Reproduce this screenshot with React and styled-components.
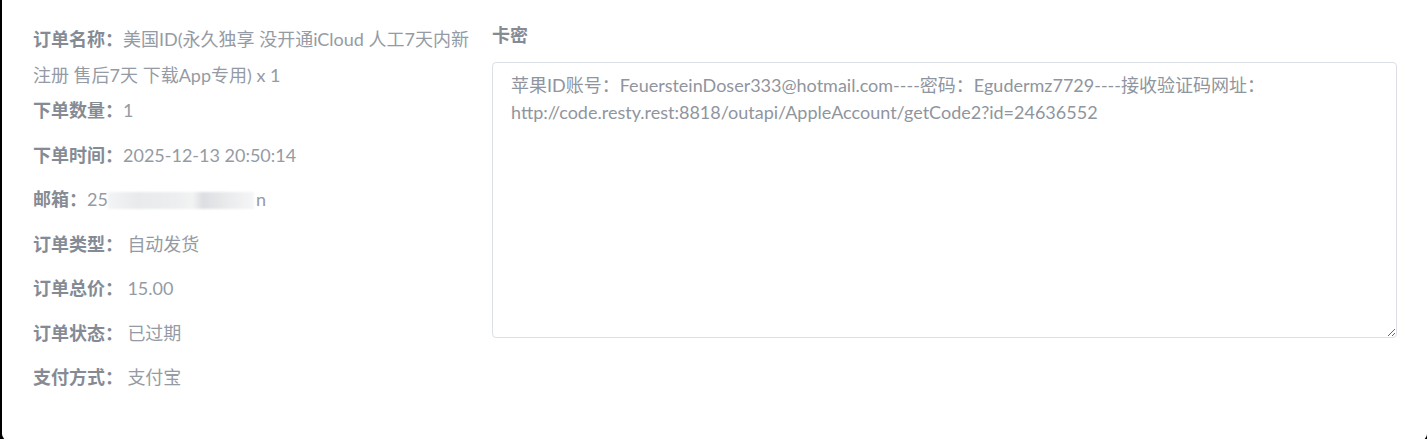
import React from "react";
import styled, { createGlobalStyle } from "styled-components";

const Global = createGlobalStyle`
  html, body { margin: 0; padding: 0; background: #000; overflow: hidden; }
  body { font-family: Lato, "Noto Sans CJK SC", sans-serif; }
`;

const Panel = styled.div`
  margin-left: 2px;
  width: 1425px;
  height: 440px;
  box-sizing: border-box;
  background: #fff;
  border-radius: 0 0 6px 6px;
  padding: 22px 15px 0 16px;
  display: grid;
  grid-template-columns: 459px 1fr;
  align-items: start;
`;

const InfoCol = styled.div`
  padding: 0 4px 0 15px;
  min-width: 0;
`;

const CardCol = styled.div`
  padding: 0 15px;
  min-width: 0;
`;

const Item = styled.div`
  font-size: 18px;
  line-height: 35.5px;
  color: #959ba4;
  margin-top: ${(p) => (p.$gap ? "9px" : "0")};
`;

const Label = styled.b`
  font-weight: 700;
  color: #858b94;
`;

const Blur = styled.span`
  display: inline-block;
  vertical-align: middle;
  width: 146px;
  height: 17px;
  margin: -2px 2px 0 0;
  background: linear-gradient(
    90deg,
    #f3f4f5 0%,
    #e9eaec 20%,
    #eceeef 45%,
    #f2f3f3 58%,
    #dcdee1 65%,
    #e4e6e8 75%,
    #eeeff0 88%,
    #f6f6f7 100%
  );
  filter: blur(1px);
`;

const Title = styled.div`
  font-size: 18px;
  font-weight: 700;
  line-height: 27px;
  color: #858b94;
  margin-bottom: 13px;
`;

const Area = styled.textarea`
  display: block;
  width: 100%;
  height: 276px;
  box-sizing: border-box;
  border: 1px solid #dcdfe6;
  border-radius: 4px;
  padding: 9px 18px;
  font-family: Lato, "Noto Sans CJK SC", sans-serif;
  font-size: 18px;
  line-height: 27px;
  color: #8f959e;
  background: #fff;
  resize: vertical;
  outline: none;
`;

const rows = [
  { label: "订单名称：", value: "美国ID(永久独享 没开通iCloud 人工7天内新注册 售后7天 下载App专用) x 1" },
  { label: "下单数量：", value: "1" },
  { label: "下单时间：", value: "2025-12-13 20:50:14", gap: true },
  { label: "邮箱：", email: true, gap: true },
  { label: "订单类型： ", value: "自动发货", gap: true },
  { label: "订单总价： ", value: "15.00", gap: true },
  { label: "订单状态： ", value: "已过期", gap: true },
  { label: "支付方式： ", value: "支付宝", gap: true },
];

export default function App() {
  return (
    <>
      <Global />
      <Panel>
        <InfoCol>
          {rows.map((r) => (
            <Item key={r.label} $gap={r.gap}>
              <Label>{r.label}</Label>
              {r.email ? (
                <>
                  25<Blur />n
                </>
              ) : (
                r.value
              )}
            </Item>
          ))}
        </InfoCol>
        <CardCol>
          <Title>卡密</Title>
          <Area
            readOnly
            defaultValue="苹果ID账号：FeuersteinDoser333@hotmail.com----密码：Egudermz7729----接收验证码网址：http://code.resty.rest:8818/outapi/AppleAccount/getCode2?id=24636552"
          />
        </CardCol>
      </Panel>
    </>
  );
}
